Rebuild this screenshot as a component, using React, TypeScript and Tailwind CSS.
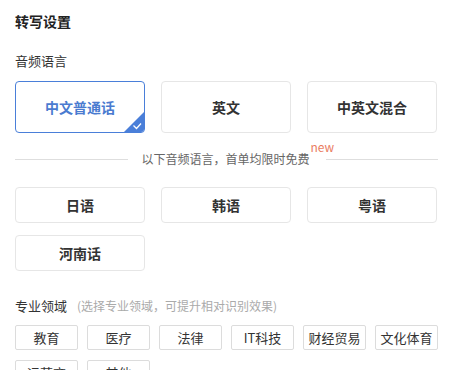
const langMain = ["中文普通话", "英文", "中英文混合"];
const langExtra = ["日语", "韩语", "粤语", "河南话"];
const domains = ["教育", "医疗", "法律", "IT科技", "财经贸易", "文化体育", "运营商", "其他"];

function CornerCheck() {
  return (
    <svg className="absolute right-0 bottom-0" width="20" height="20" viewBox="0 0 20 20">
      <polygon points="20,0 20,20 0,20" fill="#4a7fd9" />
      <path d="M9.5 13.5 L12.5 16.5 L17 11.5" fill="none" stroke="#fff" strokeWidth="1.3" />
    </svg>
  );
}

export default function App() {
  return (
    <div
      className="w-[456px] h-[370px] overflow-hidden bg-white px-[15px] pt-[11px] text-[#333]"
      style={{ fontFamily: '"Noto Sans CJK SC", "Noto Sans", sans-serif' }}
    >
      <div className="text-[14px] leading-[20px] font-bold text-[#222]">转写设置</div>

      <div className="mt-[20px] text-[13px] leading-[20px] text-[#333]">音频语言</div>

      <div className="mt-[10px] flex gap-4">
        {langMain.map((l, i) =>
          i === 0 ? (
            <div
              key={l}
              className="relative w-[130px] h-[52px] flex items-center justify-center rounded-[4px] border border-[#4a7fd9] overflow-hidden text-[14px] font-bold text-[#4a7bd0]"
            >
              {l}
              <CornerCheck />
            </div>
          ) : (
            <div
              key={l}
              className="w-[130px] h-[52px] flex items-center justify-center rounded-[4px] border border-[#e6e6e6] text-[14px] font-bold text-[#333]"
            >
              {l}
            </div>
          )
        )}
      </div>

      <div className="mt-[16px] w-[423px] h-[20px] flex items-center gap-[14px]">
        <div className="flex-1 h-px bg-[#dedede]" />
        <div className="relative text-[12px] leading-[20px] text-[#666]">
          以下音频语言，首单均限时免费
          <span className="absolute left-[100%] -top-[9px] ml-[1px] text-[12px] leading-[14px] text-[#ea7c5f]">new</span>
        </div>
        <div className="flex-1 h-px bg-[#dedede] ml-[2px]" />
      </div>

      <div className="mt-[18px] flex flex-wrap gap-x-4 gap-y-3 w-[430px]">
        {langExtra.map((l) => (
          <div
            key={l}
            className="w-[130px] h-[36px] flex items-center justify-center rounded-[4px] border border-[#e6e6e6] text-[14px] font-bold text-[#333]"
          >
            {l}
          </div>
        ))}
      </div>

      <div className="mt-[25px] flex items-center leading-[20px]">
        <span className="text-[13px] text-[#333]">专业领域</span>
        <span className="ml-[10px] text-[12px] text-[#aaa]">(选择专业领域，可提升相对识别效果)</span>
      </div>

      <div className="mt-[9px] flex flex-wrap gap-x-[9px] gap-y-[10px] w-[430px]">
        {domains.map((d) => (
          <div
            key={d}
            className="w-[63px] h-[25px] flex items-center justify-center rounded-[2px] border border-[#dcdcdc] text-[13px] text-[#333]"
          >
            {d}
          </div>
        ))}
      </div>
    </div>
  );
}
